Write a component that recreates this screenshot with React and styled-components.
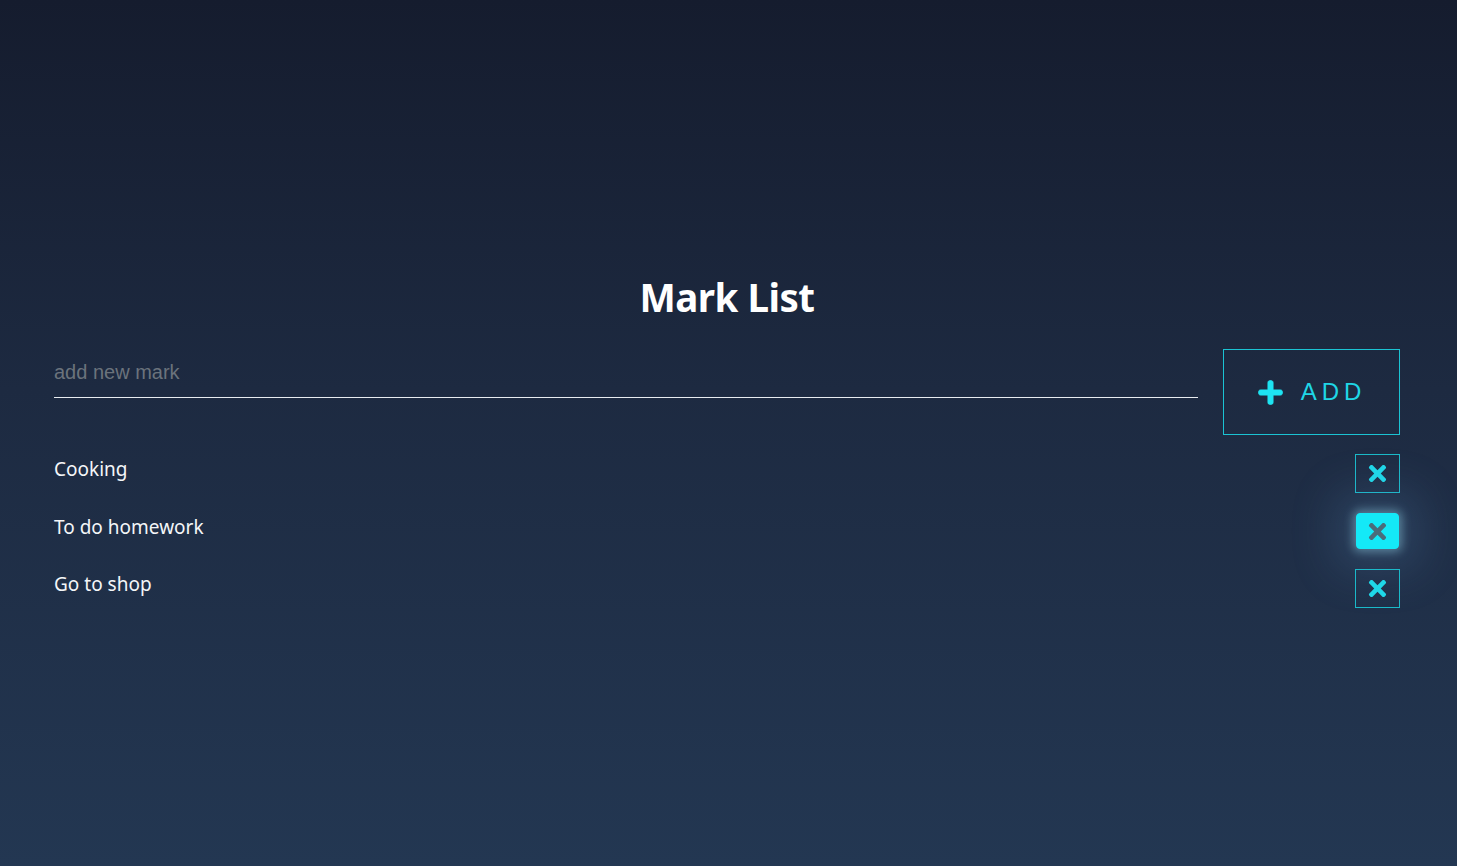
import React from "react";
import styled, { createGlobalStyle } from "styled-components";
import { FaPlus, FaTimes } from "react-icons/fa";

const Global = createGlobalStyle`
  html, body { margin: 0; padding: 0; }
  body {
    min-height: 866px;
    background: linear-gradient(180deg, #151c2e 0%, #1d2a41 45%, #233752 100%);
    font-family: "Noto Sans", "Open Sans", sans-serif;
    color: #fff;
  }
`;

const Page = styled.div`
  min-height: 866px;
  box-sizing: border-box;
  padding: 271px 57px 0 54px;
`;

const Title = styled.h1`
  margin: 0 0 26px;
  text-align: center;
  font-size: 38.5px;
  font-weight: 700;
  line-height: 52px;
  letter-spacing: -0.5px;
`;

const Form = styled.form`
  display: flex;
  align-items: stretch;
  gap: 25px;
`;

const Input = styled.input`
  flex: 1;
  align-self: flex-start;
  margin-top: 7px;
  height: 42px;
  box-sizing: border-box;
  background: transparent;
  border: none;
  border-bottom: 1px solid #e8ecf0;
  color: #fff;
  font-family: "Liberation Sans", Arial, sans-serif;
  font-size: 20px;
  padding: 0 0 9px;
  outline: none;
  &::placeholder { color: #6b737c; }
`;

const AddButton = styled.button`
  width: 177px;
  height: 86px;
  box-sizing: border-box;
  background: transparent;
  border: 1px solid #1bc3d3;
  color: #1fd6e6;
  display: flex;
  align-items: center;
  justify-content: center;
  gap: 17px;
  font-family: "Liberation Sans", Arial, sans-serif;
  font-size: 24px;
  letter-spacing: 5px;
  padding: 0 0 0 0;
  cursor: pointer;
  svg { width: 27px; height: 27px; color: #1ee4f2; stroke: #1ee4f2; stroke-width: 18px; }
`;

const List = styled.ul`
  list-style: none;
  margin: 19px 0 0;
  padding: 0;
  display: flex;
  flex-direction: column;
  gap: 18.5px;
`;

const Item = styled.li`
  display: flex;
  align-items: center;
  justify-content: space-between;
  height: 39px;
`;

const ItemText = styled.span`
  font-size: 19px;
  color: #f4f6f8;
  margin-top: -9px;
`;

const DeleteButton = styled.button`
  width: ${(p) => (p.$active ? "43px" : "45px")};
  height: ${(p) => (p.$active ? "36px" : "39px")};
  margin-right: ${(p) => (p.$active ? "1px" : "0")};
  box-sizing: border-box;
  display: flex;
  align-items: center;
  justify-content: center;
  padding: 0;
  cursor: pointer;
  border-radius: ${(p) => (p.$active ? "4px" : "0")};
  border: 1px solid ${(p) => (p.$active ? "#14e9f7" : "#1bb9c9")};
  background: ${(p) => (p.$active ? "#14e9f7" : "transparent")};
  box-shadow: ${(p) =>
    p.$active
      ? "0 0 10px 3px rgba(150, 215, 235, 0.45), 0 0 45px 22px rgba(100, 150, 200, 0.2)"
      : "none"};
  svg {
    width: 25px;
    height: 25px;
    color: ${(p) => (p.$active ? "#4b6c7a" : "#1fd8e8")};
  }
`;

const items = ["Cooking", "To do homework", "Go to shop"];

export default function App() {
  return (
    <>
      <Global />
      <Page>
        <Title>Mark List</Title>
        <Form onSubmit={(e) => e.preventDefault()}>
          <Input placeholder="add new mark" />
          <AddButton type="submit">
            <FaPlus />
            ADD
          </AddButton>
        </Form>
        <List>
          {items.map((t, i) => (
            <Item key={t}>
              <ItemText>{t}</ItemText>
              <DeleteButton $active={i === 1} aria-label="delete">
                <FaTimes />
              </DeleteButton>
            </Item>
          ))}
        </List>
      </Page>
    </>
  );
}
